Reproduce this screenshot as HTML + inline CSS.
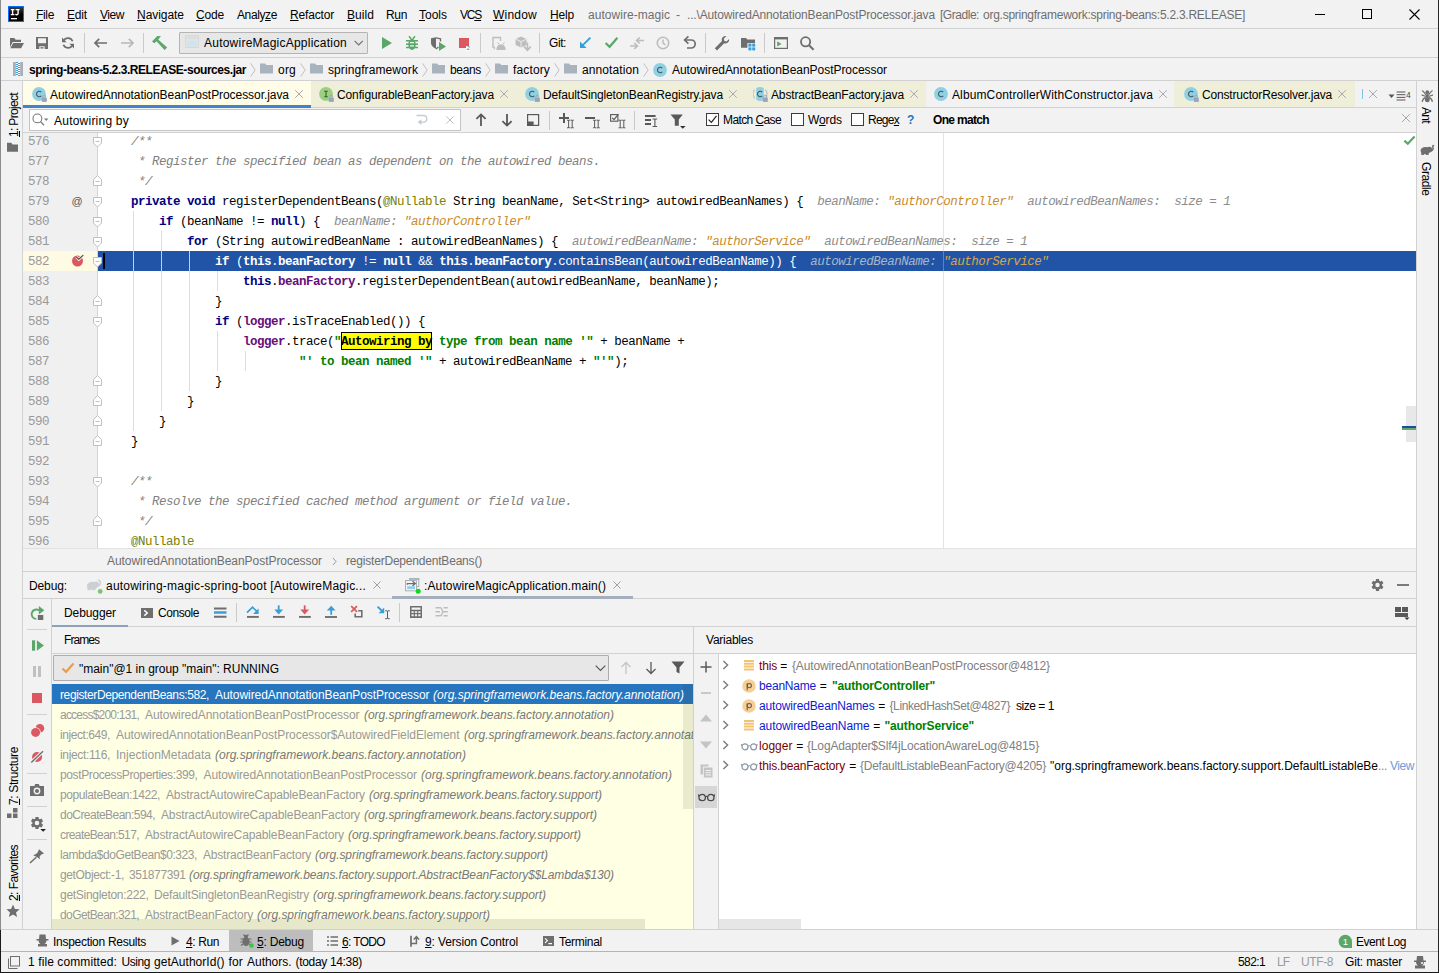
<!DOCTYPE html>
<html><head><meta charset="utf-8"><title>IDE</title><style>
html,body{margin:0;padding:0;background:#f2f2f2;}
#app{position:relative;width:1439px;height:973px;overflow:hidden;background:#f2f2f2;font-family:"Liberation Sans",sans-serif;font-size:12px;color:#000;}
.a{position:absolute;display:block;}
.t{position:absolute;white-space:pre;display:block;}
.m{font-family:"Liberation Mono",monospace;}
.b{font-weight:bold;}
.i{font-style:italic;}
.g{color:#6e6e6e;}
u{text-decoration:underline;text-underline-offset:1px;}
.code{position:absolute;white-space:pre;display:block;font-family:"Liberation Mono",monospace;font-size:12.5px;letter-spacing:-0.5px;height:20px;line-height:20px;left:103px;color:#000;}
.code b{font-weight:bold;}
.kw{color:#000080;font-weight:bold;}
.st{color:#008000;font-weight:bold;}
.cm{color:#808080;font-style:italic;}
.an{color:#808000;}
.fd{color:#660e7a;font-weight:bold;}
.hn{color:#8c8c8c;font-style:italic;}
.hs{color:#c98a2b;font-style:italic;}
.ln{position:absolute;left:28px;font-family:"Liberation Mono",monospace;font-size:12.5px;letter-spacing:-0.5px;color:#999;height:20px;line-height:20px;white-space:pre;}
</style></head>
<body><div id="app">
<div class="a" style="left:0px;top:0px;width:1439px;height:28px;background:#f2f2f2;"></div>
<div class="a" style="left:0px;top:28px;width:1439px;height:1px;background:#d1d1d1;"></div>
<div class="a" style="left:0px;top:57px;width:1439px;height:1px;background:#d1d1d1;"></div>
<div class="a" style="left:0px;top:80px;width:1439px;height:1px;background:#d1d1d1;"></div>
<div class="a" style="left:0px;top:0px;width:1px;height:973px;background:#8c8c8c;"></div>
<div class="a" style="left:22px;top:81px;width:1px;height:849px;background:#d1d1d1;"></div>
<div class="a" style="left:1416px;top:81px;width:1px;height:849px;background:#d1d1d1;"></div>
<div class="a" style="left:1438px;top:0px;width:1px;height:973px;background:#262626;"></div>
<div class="a" style="left:23px;top:107px;width:1393px;height:1px;background:#d1d1d1;"></div>
<div class="a" style="left:23px;top:132px;width:1393px;height:1px;background:#d1d1d1;"></div>
<div class="a" style="left:23px;top:133px;width:1393px;height:415px;background:#ffffff;"></div>
<div class="a" style="left:23px;top:133px;width:74px;height:415px;background:#f0f0f0;"></div>
<div class="a" style="left:97px;top:133px;width:1px;height:415px;background:#d4d4d4;"></div>
<div class="a" style="left:23px;top:548px;width:1393px;height:1px;background:#e1e1e1;"></div>
<div class="a" style="left:23px;top:571px;width:1393px;height:1px;background:#d1d1d1;"></div>
<div class="a" style="left:23px;top:598px;width:1393px;height:1px;background:#d1d1d1;"></div>
<div class="a" style="left:51px;top:599px;width:1px;height:331px;background:#d1d1d1;"></div>
<div class="a" style="left:52px;top:626px;width:1364px;height:1px;background:#d1d1d1;"></div>
<div class="a" style="left:52px;top:653px;width:1364px;height:1px;background:#d1d1d1;"></div>
<div class="a" style="left:693px;top:627px;width:1px;height:303px;background:#d1d1d1;"></div>
<div class="a" style="left:718px;top:654px;width:1px;height:276px;background:#d1d1d1;"></div>
<div class="a" style="left:0px;top:929px;width:1439px;height:1px;background:#d1d1d1;"></div>
<div class="a" style="left:0px;top:951px;width:1439px;height:1px;background:#b4b4b4;"></div>
<div class="a" style="left:0px;top:972px;width:1439px;height:1px;background:#1a1a1a;"></div>
<svg class="a" style="left:8px;top:6px;" width="16" height="16" viewBox="0 0 16 16"><defs><linearGradient id="ijg" x1="0" y1="0" x2="0" y2="1"><stop offset="0" stop-color="#3b4034"/><stop offset="0.550" stop-color="#000"/></linearGradient></defs><rect x="0" y="0" width="16" height="16" fill="#0a6cff"/><rect x="1" y="1" width="14" height="14" fill="url(#ijg)"/><path d="M2.800 3H6.400V4.300H5.300V8H6.400V9.300H2.800V8H3.900V4.300H2.800z" fill="#fff"/><path d="M7.600 3H11.600V4.300H10.800V7.300C10.800 8.600 10 9.400 8.800 9.400C8 9.400 7.400 9.100 7 8.500L7.900 7.600C8.100 7.900 8.400 8.100 8.700 8.100C9.100 8.100 9.400 7.800 9.400 7.200V4.300H7.600z" fill="#fff"/><rect x="2.900" y="12" width="6.100" height="1.300" fill="#fff"/></svg>
<span class="t " style="left:36px;top:5px;height:20px;line-height:20px;letter-spacing:-0.340px;"><u>F</u>ile</span>
<span class="t " style="left:67px;top:5px;height:20px;line-height:20px;letter-spacing:-0.176px;"><u>E</u>dit</span>
<span class="t " style="left:100px;top:5px;height:20px;line-height:20px;letter-spacing:-0.453px;"><u>V</u>iew</span>
<span class="t " style="left:137px;top:5px;height:20px;line-height:20px;letter-spacing:-0.047px;"><u>N</u>avigate</span>
<span class="t " style="left:196px;top:5px;height:20px;line-height:20px;letter-spacing:-0.176px;"><u>C</u>ode</span>
<span class="t " style="left:237px;top:5px;height:20px;line-height:20px;letter-spacing:-0.388px;">Analy<u>z</u>e</span>
<span class="t " style="left:290px;top:5px;height:20px;line-height:20px;letter-spacing:-0.170px;"><u>R</u>efactor</span>
<span class="t " style="left:347px;top:5px;height:20px;line-height:20px;letter-spacing:0.059px;"><u>B</u>uild</span>
<span class="t " style="left:386px;top:5px;height:20px;line-height:20px;letter-spacing:-0.349px;">R<u>u</u>n</span>
<span class="t " style="left:419px;top:5px;height:20px;line-height:20px;letter-spacing:-0.003px;"><u>T</u>ools</span>
<span class="t " style="left:460px;top:5px;height:20px;line-height:20px;letter-spacing:-1.200px;">VC<u>S</u></span>
<span class="t " style="left:493px;top:5px;height:20px;line-height:20px;letter-spacing:0.219px;"><u>W</u>indow</span>
<span class="t " style="left:550px;top:5px;height:20px;line-height:20px;letter-spacing:-0.172px;"><u>H</u>elp</span>
<span class="t " style="left:588px;top:5px;height:20px;line-height:20px;letter-spacing:0.045px;color:#6e6e6e;">autowire-magic</span>
<span class="t " style="left:676px;top:5px;height:20px;line-height:20px;letter-spacing:0.000px;color:#6e6e6e;">-</span>
<span class="t " style="left:687px;top:5px;height:20px;line-height:20px;letter-spacing:-0.152px;color:#6e6e6e;">...\AutowiredAnnotationBeanPostProcessor.java</span>
<span class="t " style="left:940px;top:5px;height:20px;line-height:20px;letter-spacing:-0.461px;color:#6e6e6e;">[Gradle:</span>
<span class="t " style="left:983px;top:5px;height:20px;line-height:20px;letter-spacing:-0.258px;color:#6e6e6e;">org.springframework:spring-beans:5.2.3.RELEASE]</span>
<div class="a" style="left:1315px;top:14px;width:10px;height:1px;background:#000;"></div>
<div class="a" style="left:1362px;top:9px;width:10px;height:10px;border:1px solid #000;box-sizing:border-box;"></div>
<svg class="a" style="left:1409px;top:9px;" width="11" height="11" viewBox="0 0 11 11"><path d="M0.5 0.5L10.5 10.5M10.5 0.5L0.5 10.5" stroke="#000" stroke-width="1.1" fill="none"/></svg>
<svg class="a" style="left:8px;top:35px;" width="17" height="16" viewBox="0 0 17 16"><path d="M2 3h4.3l1.4 1.8H13V7H4.6L2 12.2z" fill="#6e6e6e"/><path d="M5.2 8H16l-2.9 5.2H2.3z" fill="#6e6e6e"/></svg>
<svg class="a" style="left:36px;top:37px;" width="12" height="12" viewBox="0 0 12 12"><path fill-rule="evenodd" d="M0 0h12v12H0z M2 1.3h8v5H2z M3.3 9.2h5.4V12H3.3z" fill="#6e6e6e"/><rect x="4.4" y="10.2" width="3.2" height="1.3" fill="#6e6e6e"/></svg>
<svg class="a" style="left:61px;top:36px;" width="14" height="14" viewBox="0 0 14 14"><path d="M11.6 5.2A5 5 0 0 0 2.6 4.6" stroke="#6e6e6e" stroke-width="1.7" fill="none"/><path d="M1 1.6v4.6h4.6z" fill="#6e6e6e"/><path d="M2.4 8.8A5 5 0 0 0 11.4 9.4" stroke="#6e6e6e" stroke-width="1.7" fill="none"/><path d="M13 12.4V7.8H8.4z" fill="#6e6e6e"/></svg>
<div class="a" style="left:84px;top:33px;width:1px;height:20px;background:#c9c9c9;"></div>
<svg class="a" style="left:93px;top:36px;" width="15" height="14" viewBox="0 0 15 14"><path d="M14 7H2.400M6.200 2.800L2 7L6.200 11.200" stroke="#6e6e6e" stroke-width="1.700" fill="none"/></svg>
<svg class="a" style="left:120px;top:36px;" width="15" height="14" viewBox="0 0 15 14"><path d="M1 7H12.600M8.800 2.800L13 7L8.800 11.200" stroke="#b8b8b8" stroke-width="1.700" fill="none"/></svg>
<div class="a" style="left:143px;top:33px;width:1px;height:20px;background:#c9c9c9;"></div>
<svg class="a" style="left:151px;top:35px;" width="17" height="16" viewBox="0 0 17 16"><path d="M1 6.600L6.300 1L10 1.200L7.100 4.500L16.200 12.500L13.600 15L5.500 6.200L3.400 8.300z" fill="#59a869"/></svg>
<div class="a" style="left:179px;top:32px;width:189px;height:22px;background:#e7e7e7;border:1px solid #b4b4b4;box-sizing:border-box;border-radius:1px;"></div>
<svg class="a" style="left:185px;top:35px;" width="14" height="14" viewBox="0 0 14 14"><rect x="0.500" y="0.500" width="13" height="12" fill="#e4e4e4" stroke="#d8d8d8"/><path d="M1.500 2H12.500M1.500 3.600H12.500" stroke="#d6d6d6" stroke-width="0.800"/><rect x="2.200" y="5.500" width="9.600" height="6" fill="#cde5ee"/></svg>
<span class="t " style="left:204px;top:33px;height:20px;line-height:20px;letter-spacing:0.233px;">AutowireMagicApplication</span>
<svg class="a" style="left:354px;top:40px;" width="10" height="6" viewBox="0 0 10 6"><path d="M0.600 0.900L4.700 5L8.800 0.900" stroke="#6e6e6e" stroke-width="1.100" fill="none"/></svg>
<svg class="a" style="left:382px;top:37px;" width="10" height="12" viewBox="0 0 10 12"><path d="M0 0L10 6L0 12z" fill="#59a869"/></svg>
<svg class="a" style="left:404px;top:35px;" width="16" height="16" viewBox="0 0 16 16"><ellipse cx="8" cy="9.400" rx="3.700" ry="5.600" fill="#59a869"/><path d="M2 5.800H14M2 9.300H14M2 12.600H14M5 1.300L7.200 4M11 1.300L8.800 4" stroke="#59a869" stroke-width="1.500" fill="none"/><path d="M6 7.600H10M6 10.900H10" stroke="#f2f2f2" stroke-width="1.400"/></svg>
<svg class="a" style="left:430px;top:36px;" width="17" height="16" viewBox="0 0 17 16"><path d="M1 2.300L6 1.300V12.800C3 11.500 1 9.500 1 7z" fill="#6e6e6e"/><path d="M6 1.900L10.500 2.900V5.500" stroke="#6e6e6e" stroke-width="1.400" fill="none"/><path d="M6 12.800C7 12.300 7.800 11.600 8.400 10.800" stroke="#6e6e6e" stroke-width="1.400" fill="none"/><path d="M9 6.100L16 10.400L9 15z" fill="#59a869"/></svg>
<div class="a" style="left:459px;top:38px;width:10px;height:10px;background:#db5860;"></div>
<div class="a" style="left:466px;top:46px;width:4px;height:5px;background:#ffffff;"></div>
<span class="t " style="left:466.5px;top:44.5px;height:7px;line-height:7px;font-size:6px;color:#5a72b8;">2</span>
<div class="a" style="left:480px;top:33px;width:1px;height:20px;background:#c9c9c9;"></div>
<svg class="a" style="left:491px;top:36px;" width="15" height="15" viewBox="0 0 15 15"><path d="M2 12V1.5H9.5V5" stroke="#bdbdbd" stroke-width="1.4" fill="none"/><path d="M2.6 10.2l1.4 1.9-1.6 1.4" stroke="#bdbdbd" fill="none"/><path d="M5.4 14C5.4 10 7.4 8.4 10 8.4S14.6 10 14.6 14z" fill="#bdbdbd"/><path d="M6.6 6.4l1.6 2.2M13.4 6.4l-1.6 2.2" stroke="#bdbdbd"/></svg>
<svg class="a" style="left:515px;top:36px;" width="17" height="16" viewBox="0 0 17 16"><path d="M6 0.6L11.6 3V9L6 11.6L0.6 9V3z" fill="#bdbdbd"/><path d="M0.8 3.2L6 5.6L11.4 3.2M6 5.6V11.4" stroke="#f2f2f2" stroke-width="0.9" fill="none"/><path d="M12.4 6.5V13.4M9 10.6L12.4 14.2L15.8 10.6" stroke="#bdbdbd" stroke-width="1.7" fill="none"/></svg>
<div class="a" style="left:539px;top:33px;width:1px;height:20px;background:#c9c9c9;"></div>
<span class="t " style="left:549px;top:33px;height:20px;line-height:20px;letter-spacing:-0.418px;">Git:</span>
<svg class="a" style="left:579px;top:36px;" width="13" height="13" viewBox="0 0 13 13"><path d="M11.4 1.6L3.6 9.4" stroke="#389fd6" stroke-width="1.9" fill="none"/><path d="M1 5.4V12H7.6z" fill="#389fd6"/></svg>
<svg class="a" style="left:604px;top:36px;" width="15" height="13" viewBox="0 0 15 13"><path d="M1.6 7L5.6 10.8L13.4 1.8" stroke="#59a869" stroke-width="2.2" fill="none"/></svg>
<svg class="a" style="left:629px;top:36px;" width="16" height="15" viewBox="0 0 16 15"><path d="M1 10H8M5.200 7L8.400 10L5.200 13M15 4.500H8M10.800 1.500L7.600 4.500L10.800 7.500" stroke="#bdbdbd" stroke-width="1.700" fill="none"/></svg>
<svg class="a" style="left:656px;top:36px;" width="14" height="14" viewBox="0 0 14 14"><circle cx="7" cy="7" r="5.700" stroke="#bdbdbd" stroke-width="1.600" fill="none"/><path d="M7 3.600V7.200L9.400 8.800" stroke="#bdbdbd" stroke-width="1.500" fill="none"/></svg>
<svg class="a" style="left:682px;top:35px;" width="15" height="15" viewBox="0 0 15 15"><path d="M3 5H9.2A4 4 0 0 1 9.2 13H5" stroke="#6e6e6e" stroke-width="1.7" fill="none"/><path d="M6.4 1.4L2.6 5L6.4 8.6" stroke="#6e6e6e" stroke-width="1.7" fill="none"/></svg>
<div class="a" style="left:705px;top:33px;width:1px;height:20px;background:#c9c9c9;"></div>
<svg class="a" style="left:714px;top:35px;" width="17" height="16" viewBox="0 0 17 16"><path d="M12.400 1.100C10 0.600 7.700 2.200 7.700 4.700c0 .500.100 1 .300 1.400L0.800 13.200 3 15.400l7.200-7.100c.400.100.800.200 1.300.200 2.500 0 4-2.100 3.500-4.400l-2.400 2.400-2.200-.600-.600-2.200z" fill="#6e6e6e"/></svg>
<svg class="a" style="left:741px;top:37px;" width="15" height="14" viewBox="0 0 15 14"><path d="M0 1H5L6.4 2.6H14V6H6.4V10.8H0z" fill="#6e6e6e"/><rect x="7.4" y="6.6" width="3" height="3" fill="#389fd6"/><rect x="11.2" y="6.6" width="3" height="3" fill="#389fd6"/><rect x="7.4" y="10.4" width="3" height="3" fill="#389fd6"/><rect x="11.2" y="10.4" width="3" height="3" fill="#389fd6"/></svg>
<div class="a" style="left:764px;top:33px;width:1px;height:20px;background:#c9c9c9;"></div>
<svg class="a" style="left:774px;top:37px;" width="14" height="12" viewBox="0 0 14 12"><rect x="0.6" y="0.6" width="12.8" height="10.8" fill="none" stroke="#6e6e6e" stroke-width="1.2"/><rect x="0" y="0" width="14" height="2.4" fill="#6e6e6e"/><path d="M3.2 4.2L7.6 6.9L3.2 9.6z" fill="#59a869"/></svg>
<svg class="a" style="left:799px;top:35px;" width="16" height="16" viewBox="0 0 16 16"><circle cx="6.6" cy="6.8" r="4.6" stroke="#6e6e6e" stroke-width="1.8" fill="none"/><path d="M10 10.2L14.6 14.8" stroke="#6e6e6e" stroke-width="2" fill="none"/></svg>
<svg class="a" style="left:13px;top:62px;" width="10" height="14" viewBox="0 0 10 14"><rect x="0" y="0" width="10" height="14" fill="#ffffff"/><rect x="0" y="0" width="2.800" height="14" fill="#a9b0bb"/><rect x="7.200" y="0" width="2.800" height="14" fill="#a9b0bb"/><rect x="2.8" y="0" width="2.200" height="1" fill="#3d9fe0"/><rect x="5.0" y="1" width="2.200" height="1" fill="#3d9fe0"/><rect x="2.8" y="2" width="2.200" height="1" fill="#3d9fe0"/><rect x="5.0" y="3" width="2.200" height="1" fill="#3d9fe0"/><rect x="2.8" y="4" width="2.200" height="1" fill="#3d9fe0"/><rect x="5.0" y="5" width="2.200" height="1" fill="#3d9fe0"/><rect x="2.8" y="6" width="2.200" height="1" fill="#3d9fe0"/><rect x="5.0" y="7" width="2.200" height="1" fill="#3d9fe0"/><rect x="2.8" y="8" width="2.200" height="1" fill="#3d9fe0"/><rect x="5.0" y="9" width="2.200" height="1" fill="#3d9fe0"/><rect x="2.8" y="10" width="2.200" height="1" fill="#3d9fe0"/><rect x="5.0" y="11" width="2.200" height="1" fill="#3d9fe0"/><rect x="2.8" y="12" width="2.200" height="1" fill="#3d9fe0"/><rect x="5.0" y="13" width="2.200" height="1" fill="#3d9fe0"/></svg>
<span class="t b" style="left:29px;top:59px;height:22px;line-height:22px;letter-spacing:-0.449px;">spring-beans-5.2.3.RELEASE-sources.jar</span>
<svg class="a" style="left:250px;top:63px;" width="6" height="14" viewBox="0 0 6 14"><path d="M0.6 0.4L5.2 7L0.6 13.6" stroke="#c0c0c0" stroke-width="1" fill="none"/></svg>
<svg class="a" style="left:260px;top:63px;" width="13" height="11" viewBox="0 0 13 11"><path d="M0 0.4H5L6.4 2H13V10.6H0z" fill="#a9b3bd"/></svg>
<span class="t " style="left:278px;top:59px;height:22px;line-height:22px;letter-spacing:0.219px;">org</span>
<svg class="a" style="left:300px;top:63px;" width="6" height="14" viewBox="0 0 6 14"><path d="M0.6 0.4L5.2 7L0.6 13.6" stroke="#c0c0c0" stroke-width="1" fill="none"/></svg>
<svg class="a" style="left:310px;top:63px;" width="13" height="11" viewBox="0 0 13 11"><path d="M0 0.4H5L6.4 2H13V10.6H0z" fill="#a9b3bd"/></svg>
<span class="t " style="left:328px;top:59px;height:22px;line-height:22px;letter-spacing:0.086px;">springframework</span>
<svg class="a" style="left:422px;top:63px;" width="6" height="14" viewBox="0 0 6 14"><path d="M0.6 0.4L5.2 7L0.6 13.6" stroke="#c0c0c0" stroke-width="1" fill="none"/></svg>
<svg class="a" style="left:432px;top:63px;" width="13" height="11" viewBox="0 0 13 11"><path d="M0 0.4H5L6.4 2H13V10.6H0z" fill="#a9b3bd"/></svg>
<span class="t " style="left:450px;top:59px;height:22px;line-height:22px;letter-spacing:-0.341px;">beans</span>
<svg class="a" style="left:485px;top:63px;" width="6" height="14" viewBox="0 0 6 14"><path d="M0.6 0.4L5.2 7L0.6 13.6" stroke="#c0c0c0" stroke-width="1" fill="none"/></svg>
<svg class="a" style="left:495px;top:63px;" width="13" height="11" viewBox="0 0 13 11"><path d="M0 0.4H5L6.4 2H13V10.6H0z" fill="#a9b3bd"/></svg>
<span class="t " style="left:513px;top:59px;height:22px;line-height:22px;letter-spacing:0.141px;">factory</span>
<svg class="a" style="left:554px;top:63px;" width="6" height="14" viewBox="0 0 6 14"><path d="M0.6 0.4L5.2 7L0.6 13.6" stroke="#c0c0c0" stroke-width="1" fill="none"/></svg>
<svg class="a" style="left:564px;top:63px;" width="13" height="11" viewBox="0 0 13 11"><path d="M0 0.4H5L6.4 2H13V10.6H0z" fill="#a9b3bd"/></svg>
<span class="t " style="left:582px;top:59px;height:22px;line-height:22px;letter-spacing:0.094px;">annotation</span>
<svg class="a" style="left:643px;top:63px;" width="6" height="14" viewBox="0 0 6 14"><path d="M0.6 0.4L5.2 7L0.6 13.6" stroke="#c0c0c0" stroke-width="1" fill="none"/></svg>
<svg class="a" style="left:653px;top:63px;" width="15" height="15" viewBox="0 0 15 15"><circle cx="7" cy="7" r="6.900" fill="#8fd0e3"/><path d="M9.2 5.2A2.7 2.7 0 1 0 9.2 8.8" stroke="#46555c" stroke-width="1.050" fill="none"/></svg>
<span class="t " style="left:672px;top:59px;height:22px;line-height:22px;letter-spacing:-0.050px;">AutowiredAnnotationBeanPostProcessor</span>
<div class="a" style="left:23px;top:81px;width:288px;height:26px;background:#fffde7;"></div>
<svg class="a" style="left:32px;top:87px;" width="15" height="15" viewBox="0 0 15 15"><circle cx="7" cy="7" r="6.900" fill="#8fd0e3"/><path d="M9.2 5.2A2.7 2.7 0 1 0 9.2 8.8" stroke="#46555c" stroke-width="1.050" fill="none"/><rect x="9.800" y="10.600" width="5" height="4.300" fill="#9aa5bd"/><path d="M11 10.600V9.500a1.300 1.300 0 0 1 2.600 0V10.600" stroke="#9aa5bd" stroke-width="1" fill="none"/></svg>
<span class="t " style="left:50px;top:85px;height:20px;line-height:20px;letter-spacing:-0.061px;">AutowiredAnnotationBeanPostProcessor.java</span>
<svg class="a" style="left:294px;top:89px;" width="10" height="10" viewBox="0 0 10 10"><path d="M1.2000000000000002 1.2000000000000002L8.8 8.8M8.8 1.2000000000000002L1.2000000000000002 8.8" stroke="#a9a9b4" stroke-width="1" fill="none"/></svg>
<div class="a" style="left:311px;top:81px;width:205px;height:26px;background:#efefd9;"></div>
<svg class="a" style="left:319px;top:87px;" width="15" height="15" viewBox="0 0 15 15"><circle cx="7" cy="7" r="6.900" fill="#9ad080"/><path d="M5.2 4.3H8.8M5.2 9.7H8.8M7 4.3V9.7" stroke="#3f5a3a" stroke-width="1.1" fill="none"/><rect x="9.800" y="10.600" width="5" height="4.300" fill="#9aa5bd"/><path d="M11 10.600V9.500a1.300 1.300 0 0 1 2.600 0V10.600" stroke="#9aa5bd" stroke-width="1" fill="none"/></svg>
<span class="t " style="left:337px;top:85px;height:20px;line-height:20px;letter-spacing:-0.127px;">ConfigurableBeanFactory.java</span>
<svg class="a" style="left:499px;top:89px;" width="10" height="10" viewBox="0 0 10 10"><path d="M1.2000000000000002 1.2000000000000002L8.8 8.8M8.8 1.2000000000000002L1.2000000000000002 8.8" stroke="#a9a9b4" stroke-width="1" fill="none"/></svg>
<div class="a" style="left:516px;top:81px;width:229px;height:26px;background:#efefd9;"></div>
<svg class="a" style="left:525px;top:87px;" width="15" height="15" viewBox="0 0 15 15"><circle cx="7" cy="7" r="6.900" fill="#8fd0e3"/><path d="M9.2 5.2A2.7 2.7 0 1 0 9.2 8.8" stroke="#46555c" stroke-width="1.050" fill="none"/><rect x="9.800" y="10.600" width="5" height="4.300" fill="#9aa5bd"/><path d="M11 10.600V9.500a1.300 1.300 0 0 1 2.600 0V10.600" stroke="#9aa5bd" stroke-width="1" fill="none"/></svg>
<span class="t " style="left:543px;top:85px;height:20px;line-height:20px;letter-spacing:-0.138px;">DefaultSingletonBeanRegistry.java</span>
<svg class="a" style="left:728px;top:89px;" width="10" height="10" viewBox="0 0 10 10"><path d="M1.2000000000000002 1.2000000000000002L8.8 8.8M8.8 1.2000000000000002L1.2000000000000002 8.8" stroke="#a9a9b4" stroke-width="1" fill="none"/></svg>
<div class="a" style="left:745px;top:81px;width:181px;height:26px;background:#efefd9;"></div>
<svg class="a" style="left:753px;top:87px;" width="15" height="15" viewBox="0 0 15 15"><path d="M3.200 1.300A7 7 0 0 1 10.800 1.300V12.700A7 7 0 0 1 3.200 12.700z" fill="#8fd0e3"/><path d="M1.600 2.800A6.800 6.800 0 0 0 1.600 11.200M12.400 2.800A6.800 6.800 0 0 1 12.400 11.200" stroke="#c3cad6" stroke-width="1.500" fill="none"/><path d="M9.2 5.2A2.7 2.7 0 1 0 9.2 8.8" stroke="#46555c" stroke-width="1.050" fill="none"/><rect x="9.800" y="10.600" width="5" height="4.300" fill="#9aa5bd"/><path d="M11 10.600V9.500a1.300 1.300 0 0 1 2.600 0V10.600" stroke="#9aa5bd" stroke-width="1" fill="none"/></svg>
<span class="t " style="left:771px;top:85px;height:20px;line-height:20px;letter-spacing:-0.146px;">AbstractBeanFactory.java</span>
<svg class="a" style="left:909px;top:89px;" width="10" height="10" viewBox="0 0 10 10"><path d="M1.2000000000000002 1.2000000000000002L8.8 8.8M8.8 1.2000000000000002L1.2000000000000002 8.8" stroke="#a9a9b4" stroke-width="1" fill="none"/></svg>
<svg class="a" style="left:934px;top:87px;" width="15" height="15" viewBox="0 0 15 15"><circle cx="7" cy="7" r="6.900" fill="#8fd0e3"/><path d="M9.2 5.2A2.7 2.7 0 1 0 9.2 8.8" stroke="#46555c" stroke-width="1.050" fill="none"/></svg>
<span class="t " style="left:952px;top:85px;height:20px;line-height:20px;letter-spacing:0.121px;">AlbumControllerWithConstructor.java</span>
<svg class="a" style="left:1158px;top:89px;" width="10" height="10" viewBox="0 0 10 10"><path d="M1.2000000000000002 1.2000000000000002L8.8 8.8M8.8 1.2000000000000002L1.2000000000000002 8.8" stroke="#a9a9b4" stroke-width="1" fill="none"/></svg>
<div class="a" style="left:1174px;top:81px;width:181px;height:26px;background:#efefd9;"></div>
<svg class="a" style="left:1184px;top:87px;" width="15" height="15" viewBox="0 0 15 15"><circle cx="7" cy="7" r="6.900" fill="#8fd0e3"/><path d="M9.2 5.2A2.7 2.7 0 1 0 9.2 8.8" stroke="#46555c" stroke-width="1.050" fill="none"/><rect x="9.800" y="10.600" width="5" height="4.300" fill="#9aa5bd"/><path d="M11 10.600V9.500a1.300 1.300 0 0 1 2.600 0V10.600" stroke="#9aa5bd" stroke-width="1" fill="none"/></svg>
<span class="t " style="left:1202px;top:85px;height:20px;line-height:20px;letter-spacing:-0.169px;">ConstructorResolver.java</span>
<svg class="a" style="left:1337px;top:89px;" width="10" height="10" viewBox="0 0 10 10"><path d="M1.2000000000000002 1.2000000000000002L8.8 8.8M8.8 1.2000000000000002L1.2000000000000002 8.8" stroke="#a9a9b4" stroke-width="1" fill="none"/></svg>
<div class="a" style="left:23px;top:105px;width:288px;height:3px;background:#4083c9;"></div>
<div class="a" style="left:1362px;top:89px;width:1px;height:10px;background:#7fc4e8;"></div>
<svg class="a" style="left:1368px;top:89px;" width="10" height="10" viewBox="0 0 10 10"><path d="M1 1L9 9M9 1L1 9" stroke="#a9a9b4" stroke-width="1" fill="none"/></svg>
<svg class="a" style="left:1388px;top:91px;" width="24" height="10" viewBox="0 0 24 10"><path d="M0.5 3.5H6.5L3.5 7z" fill="#555"/><path d="M8.6 1H17.4M8.6 3.7H17.4M8.6 6.4H17.4M8.6 9H17.4" stroke="#555" stroke-width="1"/></svg>
<span class="t " style="left:1406px;top:89px;height:12px;line-height:12px;font-size:8.5px;color:#4a4a4a;">4</span>
<div class="a" style="left:29px;top:109px;width:432px;height:22px;background:#ffffff;border:1px solid #c4c4c4;box-sizing:border-box;"></div>
<svg class="a" style="left:32px;top:113px;" width="17" height="14" viewBox="0 0 17 14"><circle cx="5.400" cy="5.400" r="4.400" stroke="#7a7a7a" stroke-width="1.100" fill="none"/><path d="M8.600 8.600L12 12.200" stroke="#7a7a7a" stroke-width="1.300"/><path d="M12 5.400H16.400L14.200 8z" fill="#7a7a7a"/></svg>
<span class="t " style="left:54px;top:111px;height:20px;line-height:20px;letter-spacing:0.227px;">Autowiring by</span>
<svg class="a" style="left:415px;top:113px;" width="14" height="13" viewBox="0 0 14 13"><path d="M1.500 2.500H8.500A3.300 3.300 0 0 1 8.500 9.100H5" stroke="#c3ccd3" stroke-width="1.300" fill="none"/><path d="M2.600 9.100L6.400 6.300V11.900z" fill="#c3ccd3"/></svg>
<svg class="a" style="left:445px;top:115px;" width="10" height="10" viewBox="0 0 10 10"><path d="M1.4 1.4L8.6 8.6M8.6 1.4L1.4 8.6" stroke="#b8c2ca" stroke-width="1" fill="none"/></svg>
<svg class="a" style="left:475px;top:113px;" width="12" height="14" viewBox="0 0 12 14"><path d="M6 13V2M1.400 5.800L6 1.400L10.600 5.800" stroke="#595959" stroke-width="1.800" fill="none"/></svg>
<svg class="a" style="left:501px;top:113px;" width="12" height="14" viewBox="0 0 12 14"><path d="M6 1V12M1.400 8.200L6 12.600L10.600 8.200" stroke="#595959" stroke-width="1.800" fill="none"/></svg>
<svg class="a" style="left:527px;top:114px;" width="13" height="12" viewBox="0 0 13 12"><rect x="0.600" y="0.600" width="11" height="10.800" fill="none" stroke="#595959" stroke-width="1.200"/><rect x="0.600" y="7.500" width="6" height="3.900" fill="#595959"/></svg>
<div class="a" style="left:549px;top:111px;width:1px;height:19px;background:#c9c9c9;"></div>
<svg class="a" style="left:559px;top:112px;" width="17" height="17" viewBox="0 0 17 17"><path d="M5 1V11M0 6H10" stroke="#595959" stroke-width="2"/><path d="M8 8.2h1.100c.300 0 .500.200.500.500c0-.300.200-.500.500-.500h1.100M8 15.799999999999999h1.100c.300 0 .500-.200.500-.500c0 .300.200.500.500.500h1.100M9.6 8.7v6.600M11.6 8.2h1.100c.300 0 .500.200.500.500c0-.300.200-.500.500-.500h1.100M11.6 15.799999999999999h1.100c.300 0 .500-.200.500-.500c0 .300.200.500.500.500h1.100M13.2 8.7v6.600" stroke="#333" stroke-width="0.800" fill="none"/></svg>
<svg class="a" style="left:585px;top:112px;" width="17" height="17" viewBox="0 0 17 17"><path d="M0 6H10" stroke="#595959" stroke-width="2"/><path d="M8 8.2h1.100c.300 0 .500.200.500.500c0-.300.200-.500.500-.500h1.100M8 15.799999999999999h1.100c.300 0 .500-.200.500-.500c0 .300.200.500.500.500h1.100M9.6 8.7v6.600M11.6 8.2h1.100c.300 0 .500.200.500.500c0-.300.200-.500.500-.500h1.100M11.6 15.799999999999999h1.100c.300 0 .500-.200.500-.500c0 .300.200.500.500.500h1.100M13.2 8.7v6.600" stroke="#333" stroke-width="0.800" fill="none"/></svg>
<svg class="a" style="left:610px;top:112px;" width="17" height="17" viewBox="0 0 17 17"><rect x="0.600" y="2.600" width="7.300" height="6.600" fill="none" stroke="#595959" stroke-width="1.100"/><path d="M2.200 5.800L4 7.600L8.400 2.200" stroke="#595959" stroke-width="1.200" fill="none"/><path d="M8.6 8.2h1.100c.300 0 .500.200.500.500c0-.300.200-.500.500-.500h1.100M8.6 15.799999999999999h1.100c.300 0 .500-.200.500-.500c0 .300.200.500.500.500h1.100M10.2 8.7v6.600M12.2 8.2h1.100c.300 0 .500.200.500.500c0-.300.200-.500.500-.500h1.100M12.2 15.799999999999999h1.100c.300 0 .500-.200.500-.500c0 .300.200.500.500.500h1.100M13.799999999999999 8.7v6.600" stroke="#333" stroke-width="0.800" fill="none"/></svg>
<div class="a" style="left:634px;top:111px;width:1px;height:19px;background:#c9c9c9;"></div>
<svg class="a" style="left:645px;top:114px;" width="15" height="14" viewBox="0 0 15 14"><path d="M0 2H10.600M0 6H6M0 10H6" stroke="#595959" stroke-width="2"/><path d="M7.600 5h1.400c.500 0 .900.300.900.700c0-.400.400-.700.900-.700h1.400M7.600 12.500h1.400c.500 0 .900-.300.900-.700c0 .400.400.700.900.700h1.400M9.900 5.600v6.300" stroke="#595959" stroke-width="1.100" fill="none"/></svg>
<svg class="a" style="left:670px;top:114px;" width="17" height="15" viewBox="0 0 17 15"><path d="M0.500 0.500H12.800L8.800 5.600V11.700H4.800V5.600z" fill="#595959"/><path d="M10 12H15.600L12.800 14.800z" fill="#333"/></svg>
<div class="a" style="left:706px;top:113px;width:13px;height:13px;background:#ffffff;border:1px solid #3c3c3c;box-sizing:border-box;"></div>
<svg class="a" style="left:706px;top:113px;" width="13" height="13" viewBox="0 0 13 13"><path d="M2.600 6.600L5.400 9.400L10.500 2.800" stroke="#222" stroke-width="1.200" fill="none"/></svg>
<span class="t " style="left:723px;top:110px;height:20px;line-height:20px;letter-spacing:-0.605px;">Match <u>C</u>ase</span>
<div class="a" style="left:791px;top:113px;width:13px;height:13px;background:#ffffff;border:1px solid #3c3c3c;box-sizing:border-box;"></div>
<span class="t " style="left:808px;top:110px;height:20px;line-height:20px;letter-spacing:-0.094px;">W<u>o</u>rds</span>
<div class="a" style="left:851px;top:113px;width:13px;height:13px;background:#ffffff;border:1px solid #3c3c3c;box-sizing:border-box;"></div>
<span class="t " style="left:868px;top:110px;height:20px;line-height:20px;letter-spacing:-0.738px;">Rege<u>x</u></span>
<span class="t b" style="left:907px;top:110px;height:20px;line-height:20px;color:#2675bf;">?</span>
<span class="t b" style="left:933px;top:110px;height:20px;line-height:20px;letter-spacing:-0.668px;">One match</span>
<svg class="a" style="left:1401px;top:113px;" width="10" height="10" viewBox="0 0 10 10"><path d="M1 1L9 9M9 1L1 9" stroke="#a8a8a8" stroke-width="1" fill="none"/></svg>
<div class="a" style="left:23px;top:133px;width:1393px;height:415px;overflow:hidden;">
<div class="a" style="left:0px;top:118px;width:74px;height:20px;background:#fffae3;"></div>
<div class="a" style="left:75px;top:118px;width:1318px;height:20px;background:#2154a6;"></div>
<div class="a" style="left:920px;top:0px;width:1px;height:415px;background:#e3e3e3;"></div>
<div class="a" style="left:920px;top:118px;width:1px;height:20px;background:#5d82c4;"></div>
<div class="a" style="left:110px;top:78px;width:1px;height:220px;background:#dcdcdc;"></div>
<div class="a" style="left:138px;top:98px;width:1px;height:180px;background:#dcdcdc;"></div>
<div class="a" style="left:166px;top:118px;width:1px;height:140px;background:#dcdcdc;"></div>
<div class="a" style="left:194px;top:138px;width:1px;height:20px;background:#dcdcdc;"></div>
<div class="a" style="left:194px;top:198px;width:1px;height:40px;background:#dcdcdc;"></div>
<div class="a" style="left:222px;top:218px;width:1px;height:20px;background:#dcdcdc;"></div>
<div class="a" style="left:110px;top:118px;width:1px;height:20px;background:#c3cfe8;"></div>
<div class="a" style="left:138px;top:118px;width:1px;height:20px;background:#c3cfe8;"></div>
<div class="a" style="left:166px;top:118px;width:1px;height:20px;background:#c3cfe8;"></div>
<div class="a" style="left:80px;top:120px;width:2px;height:16px;background:#000;"></div>
<div class="a" style="left:318px;top:199px;width:91px;height:18px;background:#ffff00;border:1px solid #000;box-sizing:border-box;"></div>
<span class="ln" style="top:-1px;left:5px">576</span>
<span class="code" style="top:-1px;left:80px">    <span class="cm">/**</span></span>
<span class="ln" style="top:19px;left:5px">577</span>
<span class="code" style="top:19px;left:80px">     <span class="cm">* Register the specified bean as dependent on the autowired beans.</span></span>
<span class="ln" style="top:39px;left:5px">578</span>
<span class="code" style="top:39px;left:80px">     <span class="cm">*/</span></span>
<span class="ln" style="top:59px;left:5px">579</span>
<span class="code" style="top:59px;left:80px">    <span class="kw">private</span> <span class="kw">void</span> registerDependentBeans(<span class="an">@Nullable</span> String beanName, Set&lt;String&gt; autowiredBeanNames) {<span class="hn">  beanName: </span><span class="hs">"authorController"</span><span class="hn">  autowiredBeanNames:  size = 1</span></span>
<span class="ln" style="top:79px;left:5px">580</span>
<span class="code" style="top:79px;left:80px">        <span class="kw">if</span> (beanName != <span class="kw">null</span>) {<span class="hn">  beanName: </span><span class="hs">"authorController"</span></span>
<span class="ln" style="top:99px;left:5px">581</span>
<span class="code" style="top:99px;left:80px">            <span class="kw">for</span> (String autowiredBeanName : autowiredBeanNames) {<span class="hn">  autowiredBeanName: </span><span class="hs">"authorService"</span><span class="hn">  autowiredBeanNames:  size = 1</span></span>
<span class="ln" style="top:119px;left:5px">582</span>
<span class="code" style="top:119px;left:80px"><span style="color:#fff">                <b>if</b> (<b>this</b>.<b>beanFactory</b> != <b>null</b> &amp;&amp; <b>this</b>.<b>beanFactory</b>.containsBean(autowiredBeanName)) {</span><span class="hn" style="color:#a9b7c6">  autowiredBeanName: </span><span class="hs" style="color:#d9a44a">"authorService"</span></span>
<span class="ln" style="top:139px;left:5px">583</span>
<span class="code" style="top:139px;left:80px">                    <span class="kw">this</span>.<span class="fd">beanFactory</span>.registerDependentBean(autowiredBeanName, beanName);</span>
<span class="ln" style="top:159px;left:5px">584</span>
<span class="code" style="top:159px;left:80px">                }</span>
<span class="ln" style="top:179px;left:5px">585</span>
<span class="code" style="top:179px;left:80px">                <span class="kw">if</span> (<span class="fd">logger</span>.isTraceEnabled()) {</span>
<span class="ln" style="top:199px;left:5px">586</span>
<span class="code" style="top:199px;left:80px">                    <span class="fd">logger</span>.trace(<span class="st">"</span><b>Autowiring by</b><span class="st"> type from bean name '"</span> + beanName +</span>
<span class="ln" style="top:219px;left:5px">587</span>
<span class="code" style="top:219px;left:80px">                            <span class="st">"' to bean named '"</span> + autowiredBeanName + <span class="st">"'"</span>);</span>
<span class="ln" style="top:239px;left:5px">588</span>
<span class="code" style="top:239px;left:80px">                }</span>
<span class="ln" style="top:259px;left:5px">589</span>
<span class="code" style="top:259px;left:80px">            }</span>
<span class="ln" style="top:279px;left:5px">590</span>
<span class="code" style="top:279px;left:80px">        }</span>
<span class="ln" style="top:299px;left:5px">591</span>
<span class="code" style="top:299px;left:80px">    }</span>
<span class="ln" style="top:319px;left:5px">592</span>
<span class="code" style="top:319px;left:80px"></span>
<span class="ln" style="top:339px;left:5px">593</span>
<span class="code" style="top:339px;left:80px">    <span class="cm">/**</span></span>
<span class="ln" style="top:359px;left:5px">594</span>
<span class="code" style="top:359px;left:80px">     <span class="cm">* Resolve the specified cached method argument or field value.</span></span>
<span class="ln" style="top:379px;left:5px">595</span>
<span class="code" style="top:379px;left:80px">     <span class="cm">*/</span></span>
<span class="ln" style="top:399px;left:5px">596</span>
<span class="code" style="top:399px;left:80px">    <span class="an">@Nullable</span></span>
<svg class="a" style="left:70px;top:4px" width="9" height="11" viewBox="0 0 9 11"><path d="M0.5 0.5H8.5V6L4.5 10L0.5 6z" fill="#ffffff" stroke="#c0c0c0" stroke-width="1"/><path d="M2.5 4.5H6.5" stroke="#c0c0c0" stroke-width="1"/></svg>
<svg class="a" style="left:70px;top:42px" width="9" height="11" viewBox="0 0 9 11"><path d="M0.5 10.5H8.5V4.5L4.5 0.5L0.5 4.5z" fill="#ffffff" stroke="#c0c0c0" stroke-width="1"/><path d="M2.5 6.5H6.5" stroke="#c0c0c0" stroke-width="1"/></svg>
<svg class="a" style="left:70px;top:64px" width="9" height="11" viewBox="0 0 9 11"><path d="M0.5 0.5H8.5V6L4.5 10L0.5 6z" fill="#ffffff" stroke="#c0c0c0" stroke-width="1"/><path d="M2.5 4.5H6.5" stroke="#c0c0c0" stroke-width="1"/></svg>
<svg class="a" style="left:70px;top:84px" width="9" height="11" viewBox="0 0 9 11"><path d="M0.5 0.5H8.5V6L4.5 10L0.5 6z" fill="#ffffff" stroke="#c0c0c0" stroke-width="1"/><path d="M2.5 4.5H6.5" stroke="#c0c0c0" stroke-width="1"/></svg>
<svg class="a" style="left:70px;top:104px" width="9" height="11" viewBox="0 0 9 11"><path d="M0.5 0.5H8.5V6L4.5 10L0.5 6z" fill="#ffffff" stroke="#c0c0c0" stroke-width="1"/><path d="M2.5 4.5H6.5" stroke="#c0c0c0" stroke-width="1"/></svg>
<svg class="a" style="left:70px;top:124px" width="9" height="11" viewBox="0 0 9 11"><path d="M0.5 0.5H8.5V6L4.5 10L0.5 6z" fill="#ffffff" stroke="#c0c0c0" stroke-width="1"/><path d="M2.5 4.5H6.5" stroke="#c0c0c0" stroke-width="1"/></svg>
<svg class="a" style="left:70px;top:162px" width="9" height="11" viewBox="0 0 9 11"><path d="M0.5 10.5H8.5V4.5L4.5 0.5L0.5 4.5z" fill="#ffffff" stroke="#c0c0c0" stroke-width="1"/><path d="M2.5 6.5H6.5" stroke="#c0c0c0" stroke-width="1"/></svg>
<svg class="a" style="left:70px;top:184px" width="9" height="11" viewBox="0 0 9 11"><path d="M0.5 0.5H8.5V6L4.5 10L0.5 6z" fill="#ffffff" stroke="#c0c0c0" stroke-width="1"/><path d="M2.5 4.5H6.5" stroke="#c0c0c0" stroke-width="1"/></svg>
<svg class="a" style="left:70px;top:242px" width="9" height="11" viewBox="0 0 9 11"><path d="M0.5 10.5H8.5V4.5L4.5 0.5L0.5 4.5z" fill="#ffffff" stroke="#c0c0c0" stroke-width="1"/><path d="M2.5 6.5H6.5" stroke="#c0c0c0" stroke-width="1"/></svg>
<svg class="a" style="left:70px;top:262px" width="9" height="11" viewBox="0 0 9 11"><path d="M0.5 10.5H8.5V4.5L4.5 0.5L0.5 4.5z" fill="#ffffff" stroke="#c0c0c0" stroke-width="1"/><path d="M2.5 6.5H6.5" stroke="#c0c0c0" stroke-width="1"/></svg>
<svg class="a" style="left:70px;top:282px" width="9" height="11" viewBox="0 0 9 11"><path d="M0.5 10.5H8.5V4.5L4.5 0.5L0.5 4.5z" fill="#ffffff" stroke="#c0c0c0" stroke-width="1"/><path d="M2.5 6.5H6.5" stroke="#c0c0c0" stroke-width="1"/></svg>
<svg class="a" style="left:70px;top:302px" width="9" height="11" viewBox="0 0 9 11"><path d="M0.5 10.5H8.5V4.5L4.5 0.5L0.5 4.5z" fill="#ffffff" stroke="#c0c0c0" stroke-width="1"/><path d="M2.5 6.5H6.5" stroke="#c0c0c0" stroke-width="1"/></svg>
<svg class="a" style="left:70px;top:344px" width="9" height="11" viewBox="0 0 9 11"><path d="M0.5 0.5H8.5V6L4.5 10L0.5 6z" fill="#ffffff" stroke="#c0c0c0" stroke-width="1"/><path d="M2.5 4.5H6.5" stroke="#c0c0c0" stroke-width="1"/></svg>
<svg class="a" style="left:70px;top:382px" width="9" height="11" viewBox="0 0 9 11"><path d="M0.5 10.5H8.5V4.5L4.5 0.5L0.5 4.5z" fill="#ffffff" stroke="#c0c0c0" stroke-width="1"/><path d="M2.5 6.5H6.5" stroke="#c0c0c0" stroke-width="1"/></svg>
<span class="t" style="left:48.5px;top:58px;height:20px;line-height:20px;font-size:11px;color:#555;">@</span>
<svg class="a" style="left:47.5px;top:119px" width="15" height="16" viewBox="0 0 15 16"><circle cx="6.500" cy="9" r="5.500" fill="#db5860"/><path d="M5.300 5L7.800 7.300L12.300 3.100" stroke="#fdf6e0" stroke-width="2.800" fill="none"/><path d="M5.300 5L7.800 7.300L12.300 3.100" stroke="#4a4a4a" stroke-width="1.200" fill="none"/></svg>
<svg class="a" style="left:1380px;top:2px" width="13" height="11" viewBox="0 0 13 11"><path d="M1.4 5.6L4.8 8.8L11.6 1.6" stroke="#59a869" stroke-width="2.2" fill="none"/></svg>
<div class="a" style="left:1383px;top:273px;width:10px;height:36px;background:rgba(0,0,0,0.09);"></div>
<div class="a" style="left:1379px;top:293px;width:14px;height:2px;background:#1f4ba3;"></div>
<div class="a" style="left:1379px;top:295px;width:14px;height:2px;background:#62a96b;"></div>
</div>
<span class="t " style="left:107px;top:550px;height:22px;line-height:22px;letter-spacing:-0.050px;color:#6e6e6e;">AutowiredAnnotationBeanPostProcessor</span>
<svg class="a" style="left:332px;top:557px;" width="5" height="9" viewBox="0 0 5 9"><path d="M1 1L4 4.500L1 8" stroke="#9a9a9a" stroke-width="1" fill="none"/></svg>
<span class="t " style="left:346px;top:550px;height:22px;line-height:22px;letter-spacing:-0.198px;color:#6e6e6e;">registerDependentBeans()</span>
<span class="t " style="left:29px;top:576px;height:20px;line-height:20px;letter-spacing:-0.117px;">Debug:</span>
<svg class="a" style="left:86px;top:578px;" width="18" height="16" viewBox="0 0 18 16"><ellipse cx="6.200" cy="7.800" rx="5.300" ry="4" fill="#cdd0d3"/><rect x="1.500" y="9" width="3" height="3.200" fill="#cdd0d3"/><rect x="6.500" y="9" width="3" height="3.200" fill="#cdd0d3"/><circle cx="10" cy="6.600" r="3" fill="#cdd0d3"/><path d="M11.800 7.800C14 7.600 14.900 5.200 14.100 3.400C13.700 2.400 12.700 1.800 12 2.600" stroke="#cdd0d3" stroke-width="1.500" fill="none"/><circle cx="14.200" cy="13.400" r="2.400" fill="#7cc76b"/></svg>
<span class="t " style="left:106px;top:576px;height:20px;line-height:20px;letter-spacing:0.215px;">autowiring-magic-spring-boot [AutowireMagic...</span>
<svg class="a" style="left:372px;top:580px;" width="10" height="10" viewBox="0 0 10 10"><path d="M1.5 1.5L8.5 8.5M8.5 1.5L1.5 8.5" stroke="#a0a0a0" stroke-width="1" fill="none"/></svg>
<svg class="a" style="left:405px;top:578px;" width="17" height="17" viewBox="0 0 17 17"><rect x="4.700" y="0.600" width="9.100" height="8" fill="none" stroke="#a9b2b7" stroke-width="1"/><rect x="4.200" y="0.100" width="10.100" height="1.700" fill="#a9b2b7"/><rect x="0.500" y="2.500" width="11" height="10.300" fill="#f4f4f4" stroke="#a9b2b7" stroke-width="1"/><rect x="0" y="2" width="2.600" height="1.200" fill="#a9b2b7"/><path d="M2.300 6.800V5.600H9.800M7.500 3.300L10.300 5.600L7.500 7.900" stroke="#6e6e6e" stroke-width="1.300" fill="none"/><rect x="2.200" y="8.200" width="7.800" height="2.900" fill="#8fd0ec"/><circle cx="13.200" cy="13.200" r="2.500" fill="#10d81e"/></svg>
<span class="t " style="left:424px;top:576px;height:20px;line-height:20px;letter-spacing:0.123px;">:AutowireMagicApplication.main()</span>
<svg class="a" style="left:612px;top:580px;" width="10" height="10" viewBox="0 0 10 10"><path d="M1.5 1.5L8.5 8.5M8.5 1.5L1.5 8.5" stroke="#a0a0a0" stroke-width="1" fill="none"/></svg>
<div class="a" style="left:392px;top:596px;width:241px;height:3px;background:#a5aebd;"></div>
<svg class="a" style="left:1371px;top:578px;" width="14" height="14" viewBox="0 0 14 14"><path fill-rule="evenodd" d="M4.78 2.73L5.00 0.98L8.00 0.98L8.22 2.73L9.33 3.38L10.96 2.69L12.46 5.29L11.06 6.36L11.06 7.64L12.46 8.71L10.96 11.31L9.33 10.62L8.22 11.27L8.00 13.02L5.00 13.02L4.78 11.27L3.67 10.62L2.04 11.31L0.54 8.71L1.94 7.64L1.94 6.36L0.54 5.29L2.04 2.69L3.67 3.38z M4.30 7.00a2.2 2.2 0 1 0 4.4 0a2.2 2.2 0 1 0 -4.4 0z" fill="#6e6e6e"/></svg>
<div class="a" style="left:1397px;top:584px;width:12px;height:2px;background:#7a7a7a;"></div>
<span class="t " style="left:64px;top:603px;height:20px;line-height:20px;letter-spacing:-0.090px;">Debugger</span>
<div class="a" style="left:52px;top:625px;width:76px;height:2px;background:#8da1b8;"></div>
<svg class="a" style="left:141px;top:608px;" width="12" height="10" viewBox="0 0 12 10"><rect width="12" height="10" fill="#6e6e6e"/><path d="M3.300 2.400L6.300 5L3.300 7.600" stroke="#fff" stroke-width="1.400" fill="none"/></svg>
<span class="t " style="left:158px;top:603px;height:20px;line-height:20px;letter-spacing:-0.433px;">Console</span>
<svg class="a" style="left:214px;top:606px;" width="13" height="12" viewBox="0 0 13 12"><path d="M0 2.500H12.500M0 10.750H12.500" stroke="#6e6e6e" stroke-width="1.900"/><path d="M0 6.500H12.500" stroke="#389fd6" stroke-width="2.500"/></svg>
<div class="a" style="left:236px;top:603px;width:1px;height:19px;background:#c9c9c9;"></div>
<svg class="a" style="left:245px;top:605px;" width="15" height="14" viewBox="0 0 15 14"><path d="M2 7.600L7.500 2.200L11.800 6.400" stroke="#389fd6" stroke-width="1.700" fill="none"/><path d="M13.600 3.400V8.900H8.100z" fill="#389fd6"/><path d="M2 11.900H13.800" stroke="#6e6e6e" stroke-width="1.900"/></svg>
<svg class="a" style="left:272px;top:605px;" width="14" height="14" viewBox="0 0 14 14"><path d="M6.700 0.300V6" stroke="#389fd6" stroke-width="1.800"/><path d="M2.300 4.600H11.100L6.700 9.400z" fill="#389fd6"/><path d="M1 11.900H12.800" stroke="#6e6e6e" stroke-width="1.900"/></svg>
<svg class="a" style="left:298px;top:605px;" width="14" height="14" viewBox="0 0 14 14"><path d="M6.700 0.300V6" stroke="#db5860" stroke-width="1.800"/><path d="M2.300 4.600H11.100L6.700 9.400z" fill="#db5860"/><path d="M1 11.900H12.800" stroke="#6e6e6e" stroke-width="1.900"/></svg>
<svg class="a" style="left:324px;top:605px;" width="14" height="14" viewBox="0 0 14 14"><path d="M7.200 9.800V4.500" stroke="#389fd6" stroke-width="1.800"/><path d="M2.800 5.600H11.600L7.200 0.700z" fill="#389fd6"/><path d="M1 12H13" stroke="#6e6e6e" stroke-width="1.900"/></svg>
<svg class="a" style="left:350px;top:605px;" width="14" height="14" viewBox="0 0 14 14"><path d="M1.200 1.200L7 6.800M7 1.200L1.200 6.800" stroke="#db5860" stroke-width="1.700"/><path d="M8.200 5.700H11.800V11.700H5.200V8.600" stroke="#6e6e6e" stroke-width="1.600" fill="none"/></svg>
<svg class="a" style="left:376px;top:605px;" width="15" height="15" viewBox="0 0 15 15"><path d="M1.600 1.600L6.400 6.400" stroke="#389fd6" stroke-width="1.900"/><path d="M2.600 8.200H8.200V2.600z" fill="#389fd6"/><path d="M9.200 5.800h1.700c.300 0 .600.300.600.600 0-.300.300-.600.600-.600H13.800M9.200 13.700h1.700c.300 0 .600-.300.600-.600 0 .300.300.600.600.600H13.800M11.500 6.400V13.100" stroke="#4a4a4a" stroke-width="0.900" fill="none"/></svg>
<div class="a" style="left:399px;top:603px;width:1px;height:19px;background:#c9c9c9;"></div>
<svg class="a" style="left:410px;top:606px;" width="12" height="12" viewBox="0 0 12 12"><path fill-rule="evenodd" d="M0 0H12V12H0z M1.500 1.500V3.700H10.500V1.500z M1.500 5.200H3.700V6.900H1.500z M4.900 5.200H7.100V6.900H4.900z M8.300 5.200H10.500V6.900H8.300z M1.500 8.300H3.700V10.300H1.500z M4.900 8.300H7.100V10.300H4.900z M8.300 8.300H10.500V10.300H8.300z" fill="#6e6e6e"/></svg>
<svg class="a" style="left:435px;top:606px;" width="13" height="12" viewBox="0 0 13 12"><path d="M0.500 1.800H5.500M8.500 1.800H12.800M0.500 5.800H5M8.500 5.800H12.800M0.500 9.800H5.500M8.500 9.800H12.800M5.500 1.800C7.500 1.800 6.500 5.800 8.500 5.800M5.500 9.800C7.500 9.800 6.500 5.800 8.500 5.800" stroke="#bdbdbd" stroke-width="1.400" fill="none"/></svg>
<svg class="a" style="left:1395px;top:607px;" width="15" height="13" viewBox="0 0 15 13"><rect x="0" y="0" width="6" height="5" fill="#5a5a5a"/><rect x="7" y="0" width="6" height="5" fill="#5a5a5a"/><rect x="0" y="6" width="13" height="4" fill="#5a5a5a"/><path d="M9.500 10.500H14.500L12 13z" fill="#333"/></svg>
<svg class="a" style="left:30px;top:605px;" width="15" height="16" viewBox="0 0 15 16"><path d="M9 5.350A4.700 4.700 0 1 0 6.300 13.900" stroke="#59a869" stroke-width="1.900" fill="none"/><path d="M8.800 1L14.300 5.200L8.800 9.400z" fill="#59a869"/><rect x="7.850" y="10" width="5.450" height="5" fill="#6e6e6e"/></svg>
<div class="a" style="left:27px;top:629px;width:20px;height:1px;background:#d0d0d0;"></div>
<svg class="a" style="left:32px;top:640px;" width="13" height="11" viewBox="0 0 13 11"><rect x="0" y="0.300" width="3.100" height="10.400" fill="#59a869"/><path d="M4.900 0.300L12 5.500L4.900 10.700z" fill="#59a869"/></svg>
<div class="a" style="left:33px;top:666px;width:3px;height:11px;background:#c0c0c0;"></div>
<div class="a" style="left:38px;top:666px;width:3px;height:11px;background:#c0c0c0;"></div>
<div class="a" style="left:32px;top:693px;width:10px;height:10px;background:#db5860;"></div>
<div class="a" style="left:27px;top:714px;width:20px;height:1px;background:#d0d0d0;"></div>
<svg class="a" style="left:30px;top:723px;" width="15" height="15" viewBox="0 0 15 15"><circle cx="9.900" cy="5.200" r="4.300" fill="#db5860"/><circle cx="5.600" cy="9.400" r="5.200" fill="#f2f2f2"/><circle cx="5.600" cy="9.400" r="4.500" fill="#db5860"/></svg>
<svg class="a" style="left:30px;top:750px;" width="15" height="14" viewBox="0 0 15 14"><circle cx="7.100" cy="7" r="5" fill="#db5860"/><path d="M1.300 12.500L13 1.300" stroke="#f2f2f2" stroke-width="3.400"/><path d="M1.300 12.500L13 1.300" stroke="#6e6e6e" stroke-width="1.400"/></svg>
<div class="a" style="left:27px;top:773px;width:20px;height:1px;background:#d0d0d0;"></div>
<svg class="a" style="left:30px;top:784px;" width="14" height="12" viewBox="0 0 14 12"><path fill-rule="evenodd" d="M0 2H4.400L5.200 0H8.800L9.600 2H14V12H0z M7 3.600a3.400 3.400 0 1 0 0 6.800 3.400 3.400 0 0 0 0-6.800z" fill="#6e6e6e"/><circle cx="7" cy="7" r="2" fill="#6e6e6e"/></svg>
<div class="a" style="left:27px;top:806px;width:20px;height:1px;background:#d0d0d0;"></div>
<svg class="a" style="left:30px;top:816px;" width="17" height="17" viewBox="0 0 17 17"><path fill-rule="evenodd" d="M5.24 2.64L5.48 0.89L8.52 0.89L8.76 2.64L9.89 3.30L11.53 2.62L13.06 5.26L11.65 6.35L11.65 7.65L13.06 8.74L11.53 11.38L9.89 10.70L8.76 11.36L8.52 13.11L5.48 13.11L5.24 11.36L4.11 10.70L2.47 11.38L0.94 8.74L2.35 7.65L2.35 6.35L0.94 5.26L2.47 2.62L4.11 3.30z M4.70 7.00a2.3 2.3 0 1 0 4.6 0a2.3 2.3 0 1 0 -4.6 0z" fill="#6e6e6e"/><path d="M10.300 13H16L13.150 15.800z" fill="#222"/></svg>
<div class="a" style="left:27px;top:839px;width:20px;height:1px;background:#d0d0d0;"></div>
<svg class="a" style="left:29px;top:848px;" width="16" height="16" viewBox="0 0 16 16"><path d="M10 1.200L15 5.600L12.300 6.600L10.600 8.400L10.900 11.300L8.300 9.200L4.200 7.300L7 6L8.800 4.200z" fill="#6e6e6e"/><path d="M7.300 9.200L1 15" stroke="#6e6e6e" stroke-width="1.500"/></svg>
<span class="t " style="left:64px;top:630px;height:20px;line-height:20px;letter-spacing:-0.945px;">Frames</span>
<span class="t " style="left:706px;top:630px;height:20px;line-height:20px;letter-spacing:-0.238px;">Variables</span>
<div class="a" style="left:53px;top:655px;width:556px;height:26px;background:#e7e7e7;border:1px solid #adadad;box-sizing:border-box;border-radius:1px;"></div>
<svg class="a" style="left:61px;top:662px;" width="14" height="12" viewBox="0 0 14 12"><path d="M1.500 6.500L5 10L12.500 1.500" stroke="#ee9a4a" stroke-width="2.200" fill="none"/></svg>
<span class="t " style="left:79px;top:659px;height:20px;line-height:20px;letter-spacing:-0.019px;">"main"@1 in group "main": RUNNING</span>
<svg class="a" style="left:595px;top:665px;" width="11" height="7" viewBox="0 0 11 7"><path d="M0.700 0.700L5.500 5.500L10.300 0.700" stroke="#555" stroke-width="1.200" fill="none"/></svg>
<svg class="a" style="left:620px;top:661px;" width="12" height="14" viewBox="0 0 12 14"><path d="M6 13V1.500M1.500 6L6 1.500L10.500 6" stroke="#c4c4c4" stroke-width="1.300" fill="none"/></svg>
<svg class="a" style="left:645px;top:661px;" width="12" height="14" viewBox="0 0 12 14"><path d="M6 1V12.500M1.500 8L6 12.500L10.500 8" stroke="#595959" stroke-width="1.300" fill="none"/></svg>
<svg class="a" style="left:671px;top:661px;" width="14" height="13" viewBox="0 0 14 13"><path d="M0.500 0.500H13.500L8.500 6.500V12.500L5.500 11V6.500z" fill="#595959"/></svg>
<div class="a" style="left:52px;top:684px;width:641px;height:245px;background:#ffffe4;"></div>
<div class="a" style="left:52px;top:684px;width:641px;height:20px;background:#2675bf;"></div>
<div class="a" style="left:52px;top:684px;width:641px;height:245px;overflow:hidden;">
<span class="t" style="left:8px;top:1px;height:20px;line-height:20px;color:#ffffff;letter-spacing:-0.387px">registerDependentBeans:582,</span>
<span class="t" style="left:163px;top:1px;height:20px;line-height:20px;color:#ffffff;letter-spacing:-0.064px">AutowiredAnnotationBeanPostProcessor</span>
<span class="t i" style="left:381px;top:1px;height:20px;line-height:20px;color:#ffffff;letter-spacing:-0.005px">(org.springframework.beans.factory.annotation)</span>
<span class="t" style="left:8px;top:21px;height:20px;line-height:20px;color:#999999;letter-spacing:-0.782px">access$200:131,</span>
<span class="t" style="left:93px;top:21px;height:20px;line-height:20px;color:#999999;letter-spacing:-0.064px">AutowiredAnnotationBeanPostProcessor</span>
<span class="t i" style="left:312px;top:21px;height:20px;line-height:20px;color:#787878;letter-spacing:-0.027px">(org.springframework.beans.factory.annotation)</span>
<span class="t" style="left:8px;top:41px;height:20px;line-height:20px;color:#999999;letter-spacing:-0.428px">inject:649,</span>
<span class="t" style="left:64px;top:41px;height:20px;line-height:20px;color:#999999;letter-spacing:-0.058px">AutowiredAnnotationBeanPostProcessor$AutowiredFieldElement</span>
<span class="t i" style="left:412px;top:41px;height:20px;line-height:20px;color:#787878;letter-spacing:-0.027px">(org.springframework.beans.factory.annotation)</span>
<span class="t" style="left:8px;top:61px;height:20px;line-height:20px;color:#999999;letter-spacing:-0.347px">inject:116,</span>
<span class="t" style="left:64px;top:61px;height:20px;line-height:20px;color:#999999;letter-spacing:0.016px">InjectionMetadata</span>
<span class="t i" style="left:163px;top:61px;height:20px;line-height:20px;color:#787878;letter-spacing:-0.005px">(org.springframework.beans.factory.annotation)</span>
<span class="t" style="left:8px;top:81px;height:20px;line-height:20px;color:#999999;letter-spacing:-0.382px">postProcessProperties:399,</span>
<span class="t" style="left:151.5px;top:81px;height:20px;line-height:20px;color:#999999;letter-spacing:-0.092px">AutowiredAnnotationBeanPostProcessor</span>
<span class="t i" style="left:369px;top:81px;height:20px;line-height:20px;color:#787878;letter-spacing:-0.005px">(org.springframework.beans.factory.annotation)</span>
<span class="t" style="left:8px;top:101px;height:20px;line-height:20px;color:#999999;letter-spacing:-0.413px">populateBean:1422,</span>
<span class="t" style="left:114px;top:101px;height:20px;line-height:20px;color:#999999;letter-spacing:-0.131px">AbstractAutowireCapableBeanFactory</span>
<span class="t i" style="left:317px;top:101px;height:20px;line-height:20px;color:#787878;letter-spacing:-0.052px">(org.springframework.beans.factory.support)</span>
<span class="t" style="left:8px;top:121px;height:20px;line-height:20px;color:#999999;letter-spacing:-0.535px">doCreateBean:594,</span>
<span class="t" style="left:109px;top:121px;height:20px;line-height:20px;color:#999999;letter-spacing:-0.131px">AbstractAutowireCapableBeanFactory</span>
<span class="t i" style="left:312px;top:121px;height:20px;line-height:20px;color:#787878;letter-spacing:-0.052px">(org.springframework.beans.factory.support)</span>
<span class="t" style="left:8px;top:141px;height:20px;line-height:20px;color:#999999;letter-spacing:-0.605px">createBean:517,</span>
<span class="t" style="left:93px;top:141px;height:20px;line-height:20px;color:#999999;letter-spacing:-0.131px">AbstractAutowireCapableBeanFactory</span>
<span class="t i" style="left:296px;top:141px;height:20px;line-height:20px;color:#787878;letter-spacing:-0.052px">(org.springframework.beans.factory.support)</span>
<span class="t" style="left:8px;top:161px;height:20px;line-height:20px;color:#999999;letter-spacing:-0.426px">lambda$doGetBean$0:323,</span>
<span class="t" style="left:151px;top:161px;height:20px;line-height:20px;color:#999999;letter-spacing:-0.214px">AbstractBeanFactory</span>
<span class="t i" style="left:263px;top:161px;height:20px;line-height:20px;color:#787878;letter-spacing:-0.052px">(org.springframework.beans.factory.support)</span>
<span class="t" style="left:8px;top:181px;height:20px;line-height:20px;color:#999999;letter-spacing:-0.362px">getObject:-1,</span>
<span class="t" style="left:77px;top:181px;height:20px;line-height:20px;color:#999999;letter-spacing:-0.398px">351877391</span>
<span class="t i" style="left:137px;top:181px;height:20px;line-height:20px;color:#787878;letter-spacing:-0.120px">(org.springframework.beans.factory.support.AbstractBeanFactory$$Lambda$130)</span>
<span class="t" style="left:8px;top:201px;height:20px;line-height:20px;color:#999999;letter-spacing:-0.290px">getSingleton:222,</span>
<span class="t" style="left:102px;top:201px;height:20px;line-height:20px;color:#999999;letter-spacing:-0.182px">DefaultSingletonBeanRegistry</span>
<span class="t i" style="left:261px;top:201px;height:20px;line-height:20px;color:#787878;letter-spacing:-0.052px">(org.springframework.beans.factory.support)</span>
<span class="t" style="left:8px;top:221px;height:20px;line-height:20px;color:#999999;letter-spacing:-0.600px">doGetBean:321,</span>
<span class="t" style="left:93px;top:221px;height:20px;line-height:20px;color:#999999;letter-spacing:-0.214px">AbstractBeanFactory</span>
<span class="t i" style="left:205px;top:221px;height:20px;line-height:20px;color:#787878;letter-spacing:-0.052px">(org.springframework.beans.factory.support)</span>
</div>
<div class="a" style="left:683px;top:684px;width:10px;height:125px;background:rgba(60,60,20,0.110);"></div>
<div class="a" style="left:52px;top:919px;width:593px;height:10px;background:rgba(40,40,0,0.115);"></div>
<div class="a" style="left:719px;top:654px;width:697px;height:275px;background:#ffffff;"></div>
<div class="a" style="left:719px;top:919px;width:82px;height:10px;background:#e6e6e6;"></div>
<svg class="a" style="left:700px;top:661px;" width="12" height="12" viewBox="0 0 12 12"><path d="M6 0.500V11.500M0.500 6H11.500" stroke="#595959" stroke-width="1.500"/></svg>
<div class="a" style="left:701px;top:692px;width:10px;height:2px;background:#c9c9c9;"></div>
<svg class="a" style="left:700px;top:714px;" width="12" height="8" viewBox="0 0 12 8"><path d="M0 7.500L6 0.500L12 7.500z" fill="#c4c4c4"/></svg>
<svg class="a" style="left:700px;top:741px;" width="12" height="8" viewBox="0 0 12 8"><path d="M0 0.500L6 7.500L12 0.500z" fill="#c4c4c4"/></svg>
<svg class="a" style="left:700px;top:764px;" width="13" height="14" viewBox="0 0 13 14"><path d="M0.500 0.500H8.500V2.500H3V10.500H0.500z" fill="#c4c4c4"/><path fill-rule="evenodd" d="M3.800 3.500H12.500V13.500H3.800z M5.500 6H11V7H5.500z M5.500 8.200H11V9.200H5.500z M5.500 10.400H11V11.400H5.500z" fill="#c4c4c4"/></svg>
<div class="a" style="left:695px;top:786px;width:22px;height:22px;background:#d6d6d6;"></div>
<svg class="a" style="left:698px;top:792px;" width="17" height="10" viewBox="0 0 17 10"><circle cx="4.200" cy="5.500" r="3.200" stroke="#4a4a4a" stroke-width="1.300" fill="none"/><circle cx="12.800" cy="5.500" r="3.200" stroke="#4a4a4a" stroke-width="1.300" fill="none"/><path d="M7.400 4.800Q8.500 3.800 9.600 4.800M1 4.500L0.300 2.500M16 4.500L16.700 2.500" stroke="#4a4a4a" stroke-width="1.100" fill="none"/></svg>
<svg class="a" style="left:722px;top:660px;" width="8" height="10" viewBox="0 0 8 10"><path d="M1.400 1L5.600 5L1.400 9" stroke="#7f7f7f" stroke-width="1.500" fill="none"/></svg>
<svg class="a" style="left:744px;top:660px;" width="10" height="11" viewBox="0 0 10 11"><path d="M0 1H10M0 3.800H10M0 6.600H10M0 9.400H10" stroke="#f3c272" stroke-width="2"/></svg>
<span class="t " style="left:759px;top:656px;height:20px;line-height:20px;letter-spacing:-0.172px;color:#7a0000;">this</span>
<span class="t " style="left:780.2px;top:656px;height:20px;line-height:20px;">=</span>
<span class="t " style="left:792px;top:656px;height:20px;line-height:20px;letter-spacing:-0.133px;color:#808080;">{AutowiredAnnotationBeanPostProcessor@4812}</span>
<svg class="a" style="left:722px;top:680px;" width="8" height="10" viewBox="0 0 8 10"><path d="M1.400 1L5.600 5L1.400 9" stroke="#7f7f7f" stroke-width="1.500" fill="none"/></svg>
<svg class="a" style="left:742px;top:679px;" width="14" height="14" viewBox="0 0 14 14"><circle cx="7" cy="7" r="6.800" fill="#f5cf96"/><path d="M5.200 4.300V11.200" stroke="#6b5d49" stroke-width="1.100" fill="none"/><circle cx="7.300" cy="6.600" r="2.100" stroke="#6b5d49" stroke-width="1.100" fill="none"/></svg>
<span class="t " style="left:759px;top:676px;height:20px;line-height:20px;letter-spacing:-0.215px;color:#0e1bd0;">beanName</span>
<span class="t " style="left:819.7px;top:676px;height:20px;line-height:20px;">=</span>
<span class="t " style="left:832px;top:676px;height:20px;line-height:20px;letter-spacing:-0.169px;color:#008000;font-weight:bold;">"authorController"</span>
<svg class="a" style="left:722px;top:700px;" width="8" height="10" viewBox="0 0 8 10"><path d="M1.400 1L5.600 5L1.400 9" stroke="#7f7f7f" stroke-width="1.500" fill="none"/></svg>
<svg class="a" style="left:742px;top:699px;" width="14" height="14" viewBox="0 0 14 14"><circle cx="7" cy="7" r="6.800" fill="#f5cf96"/><path d="M5.200 4.300V11.200" stroke="#6b5d49" stroke-width="1.100" fill="none"/><circle cx="7.300" cy="6.600" r="2.100" stroke="#6b5d49" stroke-width="1.100" fill="none"/></svg>
<span class="t " style="left:759px;top:696px;height:20px;line-height:20px;letter-spacing:-0.143px;color:#0e1bd0;">autowiredBeanNames</span>
<span class="t " style="left:878.2px;top:696px;height:20px;line-height:20px;">=</span>
<span class="t " style="left:889.5px;top:696px;height:20px;line-height:20px;letter-spacing:-0.389px;color:#808080;">{LinkedHashSet@4827}</span>
<span class="t " style="left:1016px;top:696px;height:20px;line-height:20px;letter-spacing:-0.463px;">size = 1</span>
<svg class="a" style="left:722px;top:720px;" width="8" height="10" viewBox="0 0 8 10"><path d="M1.400 1L5.600 5L1.400 9" stroke="#7f7f7f" stroke-width="1.500" fill="none"/></svg>
<svg class="a" style="left:744px;top:720px;" width="10" height="11" viewBox="0 0 10 11"><path d="M0 1H10M0 3.800H10M0 6.600H10M0 9.400H10" stroke="#f3c272" stroke-width="2"/></svg>
<span class="t " style="left:759px;top:716px;height:20px;line-height:20px;letter-spacing:-0.093px;color:#0e1bd0;">autowiredBeanName</span>
<span class="t " style="left:873.2px;top:716px;height:20px;line-height:20px;">=</span>
<span class="t " style="left:884.5px;top:716px;height:20px;line-height:20px;letter-spacing:-0.128px;color:#008000;font-weight:bold;">"authorService"</span>
<svg class="a" style="left:722px;top:740px;" width="8" height="10" viewBox="0 0 8 10"><path d="M1.400 1L5.600 5L1.400 9" stroke="#7f7f7f" stroke-width="1.500" fill="none"/></svg>
<svg class="a" style="left:741px;top:742px;" width="17" height="9" viewBox="0 0 17 9"><circle cx="4" cy="4.800" r="3" stroke="#8a98a6" stroke-width="1.200" fill="none"/><circle cx="12.600" cy="4.800" r="3" stroke="#8a98a6" stroke-width="1.200" fill="none"/><path d="M7 4.200Q8.300 3.200 9.600 4.200M1 4L0.300 2M15.600 4L16.300 2" stroke="#8a98a6" stroke-width="1" fill="none"/></svg>
<span class="t " style="left:759px;top:736px;height:20px;line-height:20px;letter-spacing:0.023px;color:#7a0000;">logger</span>
<span class="t " style="left:796.2px;top:736px;height:20px;line-height:20px;">=</span>
<span class="t " style="left:807px;top:736px;height:20px;line-height:20px;letter-spacing:-0.158px;color:#808080;">{LogAdapter$Slf4jLocationAwareLog@4815}</span>
<svg class="a" style="left:722px;top:760px;" width="8" height="10" viewBox="0 0 8 10"><path d="M1.400 1L5.600 5L1.400 9" stroke="#7f7f7f" stroke-width="1.500" fill="none"/></svg>
<svg class="a" style="left:741px;top:762px;" width="17" height="9" viewBox="0 0 17 9"><circle cx="4" cy="4.800" r="3" stroke="#8a98a6" stroke-width="1.200" fill="none"/><circle cx="12.600" cy="4.800" r="3" stroke="#8a98a6" stroke-width="1.200" fill="none"/><path d="M7 4.200Q8.300 3.200 9.600 4.200M1 4L0.300 2M15.600 4L16.300 2" stroke="#8a98a6" stroke-width="1" fill="none"/></svg>
<span class="t " style="left:759px;top:756px;height:20px;line-height:20px;letter-spacing:-0.170px;color:#7a0000;">this.beanFactory</span>
<span class="t " style="left:849.2px;top:756px;height:20px;line-height:20px;">=</span>
<span class="t " style="left:860px;top:756px;height:20px;line-height:20px;letter-spacing:-0.252px;color:#808080;">{DefaultListableBeanFactory@4205}</span>
<span class="t " style="left:1050px;top:756px;height:20px;line-height:20px;letter-spacing:-0.015px;">"org.springframework.beans.factory.support.DefaultListableBe</span>
<span class="t " style="left:1378px;top:756px;height:20px;line-height:20px;letter-spacing:-0.339px;color:#808080;">...</span>
<span class="t " style="left:1390px;top:756px;height:20px;line-height:20px;letter-spacing:-0.449px;color:#6b9bd8;">View</span>
<span class="t" style="left:13.5px;top:137px;height:16px;line-height:16px;transform-origin:0 0;transform:rotate(-90deg) translate(0,-8px);letter-spacing:-0.670px"><u>1</u>: Project</span>
<svg class="a" style="left:7px;top:142px;" width="11" height="10" viewBox="0 0 11 10"><path d="M0 0.700H4.200L5.600 2.400H11V9.800H0z" fill="#6e6e6e"/></svg>
<span class="t" style="left:13.5px;top:805px;height:16px;line-height:16px;transform-origin:0 0;transform:rotate(-90deg) translate(0,-8px);letter-spacing:-0.337px"><u>7</u>: Structure</span>
<svg class="a" style="left:7px;top:808px;" width="12" height="11" viewBox="0 0 12 11"><rect x="0" y="5.500" width="4.500" height="4.500" fill="#6e6e6e"/><rect x="6" y="5.500" width="4.500" height="4.500" fill="#6e6e6e"/><rect x="6" y="0" width="4.500" height="4.500" fill="#6e6e6e"/></svg>
<span class="t" style="left:13.5px;top:901px;height:16px;line-height:16px;transform-origin:0 0;transform:rotate(-90deg) translate(0,-8px);letter-spacing:-0.559px"><u>2</u>: Favorites</span>
<svg class="a" style="left:6px;top:904px;" width="14" height="13" viewBox="0 0 14 13"><path d="M7 0.500L8.900 4.900L13.600 5.300L10 8.400L11.100 13L7 10.500L2.900 13L4 8.400L0.400 5.300L5.100 4.900z" fill="#6e6e6e"/></svg>
<svg class="a" style="left:1421px;top:89px;" width="13" height="14" viewBox="0 0 13 14"><ellipse cx="6.300" cy="3.200" rx="1.900" ry="2" fill="#6e6e6e"/><ellipse cx="6.300" cy="6.800" rx="1.700" ry="1.900" fill="#6e6e6e"/><ellipse cx="6.300" cy="10.600" rx="2.400" ry="2.700" fill="#6e6e6e"/><path d="M1 1.500C2.500 2 4 4.500 5 6M11.600 1.500C10.100 2 8.600 4.500 7.600 6M0.600 6.200C2 6.200 3.500 7 4.800 7.400M12 6.200C10.600 6.200 9.100 7 7.800 7.400M1.200 12.800C1.500 10.500 3 9 4.800 8.400M11.400 12.800C11.100 10.500 9.600 9 7.800 8.400" stroke="#6e6e6e" stroke-width="1.200" fill="none"/></svg>
<span class="t" style="left:1425.7px;top:107px;height:16px;line-height:16px;transform-origin:0 0;transform:rotate(90deg) translate(0,-8px);letter-spacing:-0.672px">Ant</span>
<svg class="a" style="left:1420px;top:144px;" width="15" height="12" viewBox="0 0 15 12"><ellipse cx="5.400" cy="6.600" rx="4.800" ry="3.600" fill="#6e6e6e"/><rect x="1.300" y="7.500" width="2.600" height="3.500" fill="#6e6e6e"/><rect x="6" y="7.500" width="2.600" height="3.500" fill="#6e6e6e"/><circle cx="9.300" cy="5.600" r="2.900" fill="#6e6e6e"/><path d="M10.800 6.800C13 6.600 13.600 4.600 12.800 3C12.400 2 13.200 1.200 14 2" stroke="#6e6e6e" stroke-width="1.500" fill="none"/></svg>
<span class="t" style="left:1425.7px;top:162px;height:16px;line-height:16px;transform-origin:0 0;transform:rotate(90deg) translate(0,-8px);letter-spacing:-0.422px">Gradle</span>
<div class="a" style="left:229px;top:930px;width:84px;height:21px;background:#bdbdbd;"></div>
<svg class="a" style="left:36px;top:934px;" width="13" height="13" viewBox="0 0 13 13"><path d="M3.500 0.500H9.500L10 5H12.500V6.500H10.500C10.500 8 9.500 9.500 8.500 10H11V12.500H2V10H4.500C3.500 9.500 2.500 8 2.500 6.500H0.500V5H3z" fill="#6e6e6e"/></svg>
<span class="t " style="left:53px;top:932px;height:20px;line-height:20px;letter-spacing:-0.281px;">Inspection Results</span>
<svg class="a" style="left:171px;top:936px;" width="9" height="10" viewBox="0 0 9 10"><path d="M0.500 0.500L8.500 5L0.500 9.500z" fill="#6e6e6e"/></svg>
<span class="t " style="left:186px;top:932px;height:20px;line-height:20px;letter-spacing:-0.396px;"><u>4</u>: Run</span>
<svg class="a" style="left:240px;top:934px;" width="15" height="14" viewBox="0 0 15 14"><ellipse cx="6" cy="7.500" rx="3.600" ry="4.600" fill="#6e6e6e"/><circle cx="6" cy="2.800" r="2" fill="#6e6e6e"/><path d="M0.500 5H3M9 5H11.500M0.300 8H3M9 8H11.700M1 11.500L3 10M11 11.500L9 10M3.500 0.500L5 2M8.500 0.500L7 2" stroke="#6e6e6e" stroke-width="1.200" fill="none"/><circle cx="11.500" cy="11.500" r="2.300" fill="#3fc24a"/></svg>
<span class="t " style="left:257px;top:932px;height:20px;line-height:20px;letter-spacing:-0.215px;"><u>5</u>: Debug</span>
<svg class="a" style="left:327px;top:936px;" width="11" height="10" viewBox="0 0 11 10"><path d="M0 1H2M3.500 1H11M0 5H2M3.500 5H11M0 9H2M3.500 9H11" stroke="#6e6e6e" stroke-width="1.500"/></svg>
<span class="t " style="left:342px;top:932px;height:20px;line-height:20px;letter-spacing:-0.656px;"><u>6</u>: TODO</span>
<svg class="a" style="left:409px;top:935px;" width="12" height="12" viewBox="0 0 12 12"><path d="M2 0.800V11.800" stroke="#6e6e6e" stroke-width="1.700" fill="none"/><path d="M2 8.600H7.400V2.200M4.800 4.600L7.400 1.600L10 4.600" stroke="#6e6e6e" stroke-width="1.500" fill="none"/></svg>
<span class="t " style="left:425px;top:932px;height:20px;line-height:20px;letter-spacing:-0.134px;"><u>9</u>: Version Control</span>
<svg class="a" style="left:543px;top:936px;" width="11" height="10" viewBox="0 0 11 10"><rect width="11" height="10" fill="#6e6e6e"/><path d="M2 2.400L4.400 4.600L2 6.800M5.400 7.600H9" stroke="#fff" stroke-width="1.100" fill="none"/></svg>
<span class="t " style="left:559px;top:932px;height:20px;line-height:20px;letter-spacing:-0.295px;">Terminal</span>
<svg class="a" style="left:1338px;top:934px;" width="15" height="15" viewBox="0 0 15 15"><path d="M7.300 0.700A6.700 6.700 0 1 0 7.300 14.100H14V7.400A6.700 6.700 0 0 0 7.300 0.700z" fill="#59a869"/></svg>
<span class="t " style="left:1338px;top:935px;height:14px;line-height:14px;width:14.600px;text-align:center;font-size:9.500px;color:#fff;">1</span>
<span class="t " style="left:1356px;top:932px;height:20px;line-height:20px;letter-spacing:-0.450px;">Event Log</span>
<svg class="a" style="left:8px;top:956px;" width="12" height="13" viewBox="0 0 12 13"><path d="M0.500 2.500V12.500H9.500" stroke="#6e6e6e" stroke-width="1" fill="none"/><rect x="2.500" y="0.500" width="9" height="9.500" stroke="#6e6e6e" stroke-width="1" fill="none"/></svg>
<span class="t " style="left:28px;top:952px;height:20px;line-height:20px;letter-spacing:0.096px;">1 file committed:</span>
<span class="t " style="left:121.5px;top:952px;height:20px;line-height:20px;letter-spacing:-0.438px;">Using</span>
<span class="t " style="left:154px;top:952px;height:20px;line-height:20px;letter-spacing:0.035px;">getAuthorId()</span>
<span class="t " style="left:228.5px;top:952px;height:20px;line-height:20px;letter-spacing:0.161px;">for</span>
<span class="t " style="left:247px;top:952px;height:20px;line-height:20px;letter-spacing:-0.025px;">Authors.</span>
<span class="t " style="left:295.5px;top:952px;height:20px;line-height:20px;letter-spacing:-0.325px;">(today 14:38)</span>
<span class="t " style="left:1238px;top:952px;height:20px;line-height:20px;letter-spacing:-0.606px;">582:1</span>
<span class="t " style="left:1277px;top:952px;height:20px;line-height:20px;letter-spacing:-1.008px;color:#9a9a9a;">LF</span>
<span class="t " style="left:1301px;top:952px;height:20px;line-height:20px;letter-spacing:-0.400px;color:#9a9a9a;">UTF-8</span>
<span class="t " style="left:1345px;top:952px;height:20px;line-height:20px;letter-spacing:-0.153px;">Git: master</span>
<svg class="a" style="left:1413px;top:955px;" width="14" height="14" viewBox="0 0 14 14"><path d="M4 1H10L10.500 5.500H13V7H11C11 8.500 10 10 9 10.500H12V13.500H2V10.500H5C4 10 3 8.500 3 7H1V5.500H3.500z" fill="#6e6e6e"/><circle cx="9" cy="8" r="1" fill="#fff"/></svg>
<div class="a" style="left:0px;top:0px;width:1px;height:930px;background:#8c8c8c;"></div>
<div class="a" style="left:0px;top:930px;width:1px;height:43px;background:#1a1a1a;"></div>
<div class="a" style="left:1438px;top:0px;width:1px;height:973px;background:#262626;"></div>
<div class="a" style="left:0px;top:972px;width:1439px;height:1px;background:#1a1a1a;"></div>
</div></body></html>
